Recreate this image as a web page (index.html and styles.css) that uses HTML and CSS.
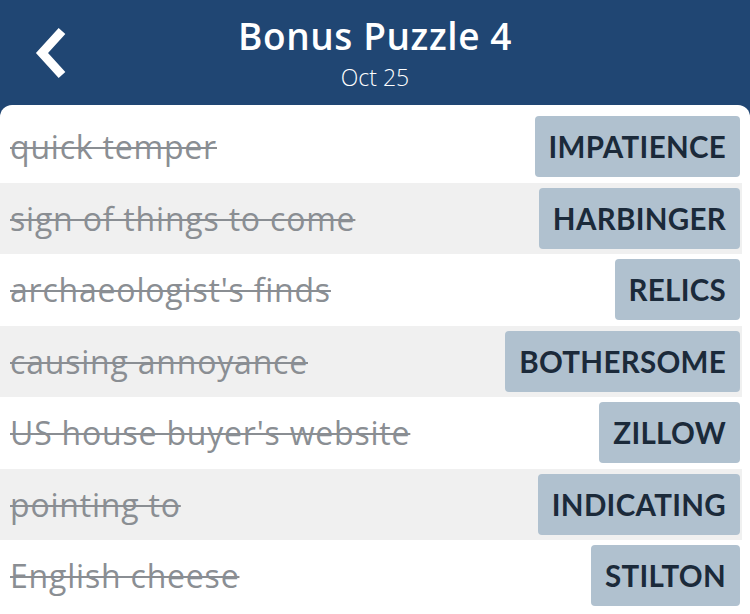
FILE: index.html
```html
<!DOCTYPE html>
<html>

	<head>
		<meta charset="UTF-8">
		<title>Bonus Puzzle 4</title>
		<link rel="stylesheet" href="styles.css">
	</head>

	<body>
		<div id="header">
			<a class="back" href="#">
				<svg width="34" height="52" viewBox="0 0 34 52">
					<path d="M28 4 L8 26 L28 48" fill="none" stroke="#fff" stroke-width="9" stroke-linejoin="miter" stroke-linecap="butt"/>
				</svg>
			</a>
			<div class="title">Bonus Puzzle 4</div>
			<div class="date">Oct 25</div>
		</div>

		<div id="panel">
			<ul id="list">
				<li class="row"><span class="clue">quick temper</span><span class="answer">IMPATIENCE</span></li>
				<li class="row"><span class="clue">sign of things to come</span><span class="answer">HARBINGER</span></li>
				<li class="row"><span class="clue">archaeologist's finds</span><span class="answer">RELICS</span></li>
				<li class="row"><span class="clue">causing annoyance</span><span class="answer">BOTHERSOME</span></li>
				<li class="row"><span class="clue">US house buyer's website</span><span class="answer">ZILLOW</span></li>
				<li class="row"><span class="clue">pointing to</span><span class="answer">INDICATING</span></li>
				<li class="row"><span class="clue">English cheese</span><span class="answer">STILTON</span></li>
			</ul>
		</div>
	</body>

</html>
```

FILE: styles.css
```css
html,
body,
ul,
li {
	margin: 0;
	padding: 0;
}

body {
	background-color: #204673;
	font-family: "Open Sans", "Noto Sans", sans-serif;
	height: 614px;
	overflow: hidden;
}

#header {
	position: relative;
	height: 105px;
	color: white;
	text-align: center;
}

#header .back {
	position: absolute;
	left: 34px;
	top: 27px;
}

#header .title {
	padding-top: 12px;
	font-size: 37px;
	font-weight: 600;
	letter-spacing: 0.6px;
	line-height: 48px;
}

#header .date {
	padding-top: 2px;
	font-size: 23px;
	font-weight: 300;
	line-height: 30px;
}

#panel {
	background-color: white;
	border-radius: 12px 12px 0 0;
	padding: 6px 8px 0 0;
	height: 509px;
}

#list {
	list-style: none;
}

.row {
	height: 71.5px;
	display: flex;
	align-items: center;
	justify-content: space-between;
	padding: 0 2px 0 10px;
}

.row:nth-child(even) {
	background-color: #f0f0f0;
}

.clue {
	font-size: 32px;
	letter-spacing: 0.8px;
	color: #8a8e93;
	text-decoration: line-through;
	text-decoration-thickness: 1.5px;
}

.answer {
	height: 61px;
	line-height: 61px;
	padding: 0 14px;
	background-color: #b0c1cf;
	border-radius: 4px;
	color: #1b2a3a;
	font-family: Lato, "Open Sans", sans-serif;
	font-size: 29.5px;
	font-weight: 700;
	letter-spacing: 0.3px;
}
```
